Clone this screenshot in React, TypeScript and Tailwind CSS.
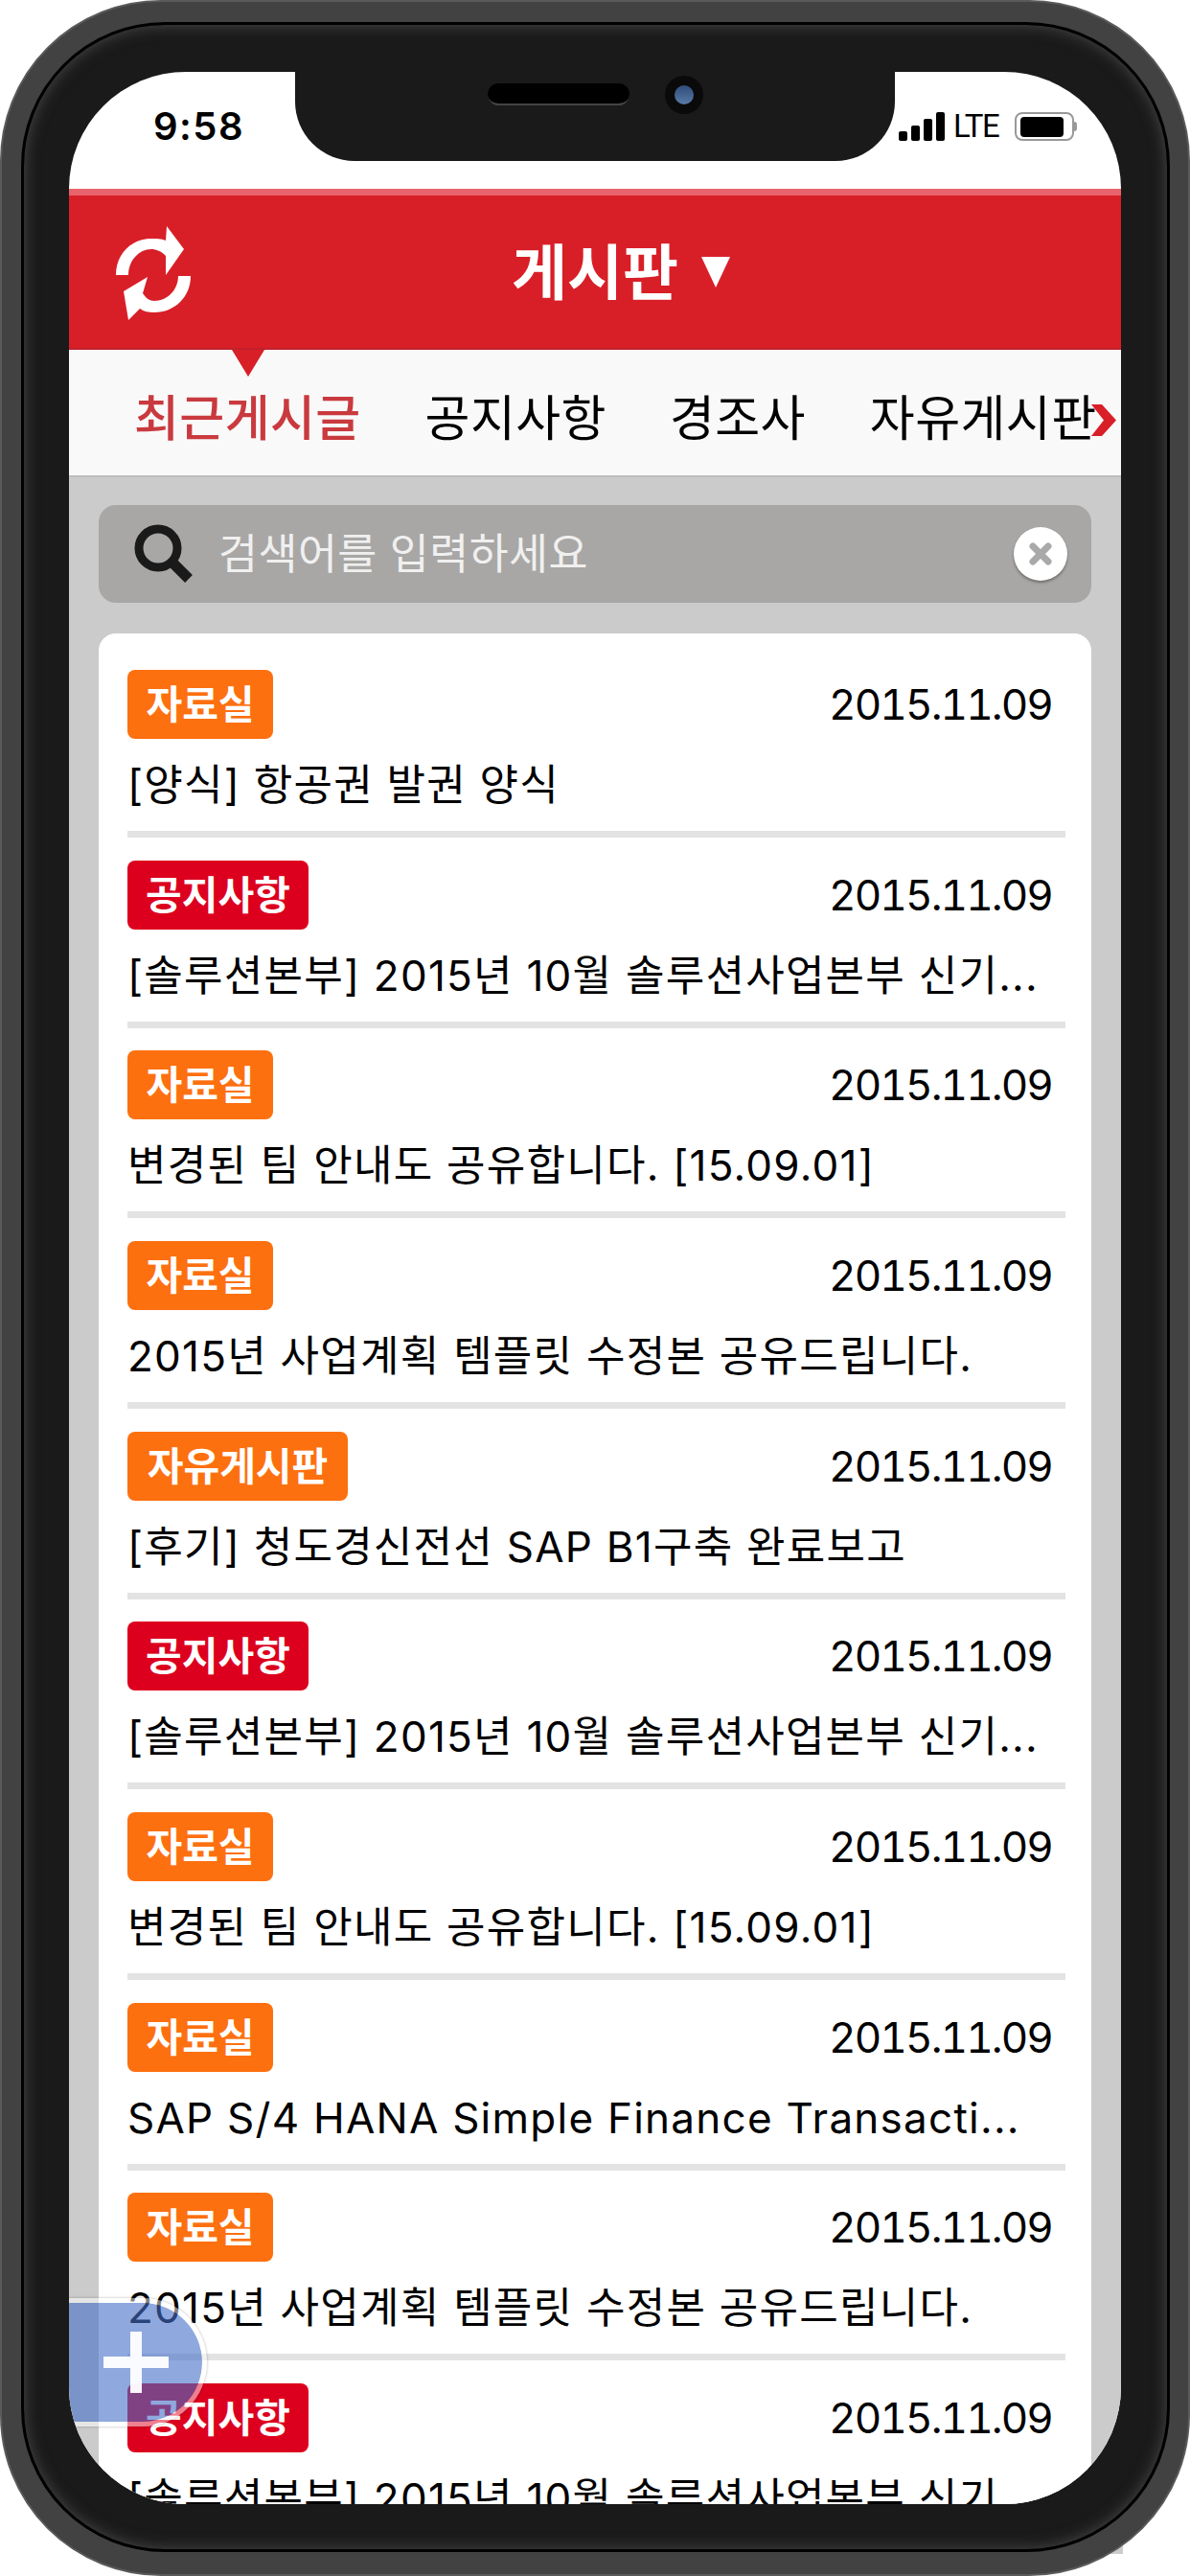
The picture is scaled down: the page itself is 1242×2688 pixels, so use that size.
const FONT = "font-['Inter','Noto_Sans_CJK_KR',sans-serif]";

type Row = { tag: string; color: string; w: string; title: string };
const ORANGE = "bg-[#fd7010]";
const RED = "bg-[#dc001e]";
const rows: Row[] = [
  { tag: "자료실", color: ORANGE, w: "w-[152px]", title: "[양식] 항공권 발권 양식" },
  { tag: "공지사항", color: RED, w: "w-[189px]", title: "[솔루션본부] 2015년 10월 솔루션사업본부 신기..." },
  { tag: "자료실", color: ORANGE, w: "w-[152px]", title: "변경된 팀 안내도 공유합니다. [15.09.01]" },
  { tag: "자료실", color: ORANGE, w: "w-[152px]", title: "2015년 사업계획 템플릿 수정본 공유드립니다." },
  { tag: "자유게시판", color: ORANGE, w: "w-[230px]", title: "[후기] 청도경신전선 SAP B1구축 완료보고" },
  { tag: "공지사항", color: RED, w: "w-[189px]", title: "[솔루션본부] 2015년 10월 솔루션사업본부 신기..." },
  { tag: "자료실", color: ORANGE, w: "w-[152px]", title: "변경된 팀 안내도 공유합니다. [15.09.01]" },
  { tag: "자료실", color: ORANGE, w: "w-[152px]", title: "SAP S/4 HANA Simple Finance Transacti..." },
  { tag: "자료실", color: ORANGE, w: "w-[152px]", title: "2015년 사업계획 템플릿 수정본 공유드립니다." },
  { tag: "공지사항", color: RED, w: "w-[189px]", title: "[솔루션본부] 2015년 10월 솔루션사업본부 신기..." },
];

function SyncIcon() {
  return (
    <svg width="78" height="98" viewBox="0 0 78 98" fill="#fff">
      <path d="M0 51 C0 28 17 13 37 13 C42 13 47 13 52 15 L53 0 L71 24 L52 51 L52 31 C47 26 42 24 37 24 C24 24 13 36 13 51 Z" />
      <path d="M78 52 C78 74 61 90 40 90 C34 90 29 89 25 86 L13 98 L8 68 L33 53 L28 70 C31 75 35 78 40 78 C54 78 65 66 65 52 Z" />
    </svg>
  );
}

function StatusIcons() {
  return (
    <div className="flex items-center">
      <div className="flex h-[30px] items-end gap-[4px]">
        <div className="h-[10px] w-[9px] rounded-[2px] bg-black" />
        <div className="h-[16px] w-[9px] rounded-[2px] bg-black" />
        <div className="h-[23px] w-[9px] rounded-[2px] bg-black" />
        <div className="h-[30px] w-[9px] rounded-[2px] bg-black" />
      </div>
      <span className="ml-[9px] w-[52px] font-['Roboto',sans-serif] text-[33px] leading-[30px] tracking-[-1.5px] text-black">LTE</span>
      <div className="ml-[12px] flex items-center">
        <div className="flex h-[30px] w-[62px] items-center rounded-[8px] border-2 border-[#999] pl-[4px]">
          <div className="h-[21px] w-[45px] rounded-[4px] bg-black" />
        </div>
        <div className="h-[10px] w-[3px] rounded-r-[3px] bg-[#999]" />
      </div>
    </div>
  );
}

function Notch() {
  return (
    <div className="absolute left-[236px] top-0 z-20 flex h-[93px] w-[626px] items-start rounded-b-[62px] bg-[#1a1a1a]">
      <div className="ml-[201px] mt-[12px] h-[23px] w-[148px] rounded-full border-b-2 border-[#444] bg-black" />
      <div className="ml-[37px] mt-[4px] flex h-[40px] w-[40px] items-center justify-center rounded-full bg-[#0a0a0a]">
        <div className="h-[20px] w-[20px] rounded-full bg-gradient-to-b from-[#2f4d7c] to-[#5a7aa6]" />
      </div>
    </div>
  );
}

function Tabs() {
  return (
    <div className="relative flex h-[131px] flex-none items-center overflow-hidden bg-[#f9f9f9] pl-[68px] pt-[12px] text-[51px] leading-[60px] tracking-[0.4px] text-black">
      <div className="absolute left-[170px] top-0 h-0 w-0 border-x-[17px] border-t-[28px] border-x-transparent border-t-[#d81f28]" />
      <span className="flex-none font-medium text-[#c93a3f]">최근게시글</span>
      <span className="ml-[67px] flex-none">공지사항</span>
      <span className="ml-[66px] flex-none">경조사</span>
      <span className="ml-[67px] flex-none">자유게시판</span>
      <svg className="absolute left-[1067px] top-[57px]" width="26" height="33" viewBox="0 0 26 33" fill="#d81f28">
        <path d="M0 0 H11 L26 16.5 L11 33 H0 L13 16.5 Z" />
      </svg>
    </div>
  );
}

function Search() {
  return (
    <div className="flex h-[102px] flex-none items-center rounded-[18px] bg-[#a8a7a5] pl-[37px] pr-[25px]">
      <svg width="62" height="62" viewBox="0 0 62 62" fill="none" stroke="#1a1a1a" className="flex-none">
        <circle cx="25" cy="25" r="20" strokeWidth="9" />
        <path d="M39 39 L57 57" strokeWidth="11" />
      </svg>
      <span className="ml-[26px] flex-1 whitespace-nowrap text-[44.5px] leading-[60px] tracking-[0.5px] text-[#f0f0f0]">검색어를 입력하세요</span>
      <div className="flex h-[56px] w-[56px] flex-none items-center justify-center rounded-full bg-white shadow-[0_2px_3px_rgba(0,0,0,0.35)]">
        <svg width="24" height="24" viewBox="0 0 24 24" stroke="#a9a9a9" strokeWidth="7" strokeLinecap="round">
          <path d="M4 4 L20 20 M20 4 L4 20" />
        </svg>
      </div>
    </div>
  );
}

function ListRow({ row }: { row: Row }) {
  return (
    <div className="h-[198.67px]">
      <div className="flex h-[72px] items-center justify-between pr-[41px]">
        <div className={`flex h-[72px] items-center justify-center rounded-[8px] text-[41px] font-semibold leading-[72px] text-white ${row.color} ${row.w}`}>
          {row.tag}
        </div>
        <span className="text-[44px] leading-[60px] tracking-[-1.9px] text-black tabular-nums">2015.11.09</span>
      </div>
      <div className="h-[96px] whitespace-nowrap text-[44px] leading-[96px] tracking-[1.25px] text-black">{row.title}</div>
      <div className="mr-[27px] h-[7px] bg-[#e3e3e3]" />
    </div>
  );
}

export default function App() {
  return (
    <div className={`relative h-[2688px] w-[1242px] bg-white ${FONT}`}>
      <div className="absolute bottom-[23px] left-[1132px] h-[40px] w-[40px] bg-[#cccccc]" />
      <div className="relative h-[2688px] w-[1242px] rounded-[168px] border-2 border-[#5a5a5a] bg-[#424242] pb-[23px] pl-[20px] pr-[19px] pt-[21px]">
        <div className="h-full w-full rounded-[150px] border-[3px] border-black bg-[#1a1a1a] pb-[46px] pl-[47px] pr-[48px] pt-[49px] shadow-[inset_0_0_16px_#4a4a4a]">
          <div className="relative flex h-[2538px] w-[1098px] flex-col overflow-hidden rounded-[122px] bg-white">
            <Notch />
            <div className="flex h-[122px] flex-none items-start justify-between pl-[88px] pr-[46px]">
              <span className="mt-[31px] text-[40px] font-semibold leading-[52px] tracking-[1.5px] text-black">9:58</span>
              <div className="mt-[42px]"><StatusIcons /></div>
            </div>
            <div className="grid h-[168px] flex-none grid-cols-[1fr_auto_1fr] items-center border-b-2 border-t-[7px] border-b-[#c1202c] border-t-[#e8636b] bg-[#d81f28]">
              <div className="pl-[49px] pt-[2px]"><SyncIcon /></div>
              <span className="text-[63px] font-bold leading-[80px] text-white">게시판</span>
              <div className="pl-[24px]">
                <svg width="30" height="32" viewBox="0 0 30 32" fill="#fff"><path d="M0 0 H30 L15 32 Z" /></svg>
              </div>
            </div>
            <Tabs />
            <div className="flex min-h-0 flex-1 flex-col overflow-hidden border-t-2 border-t-[#bdbdbd] bg-[#cbcbcb] px-[31px] pt-[29px]">
              <Search />
              <div className="mt-[32px] flex-none rounded-t-[18px] bg-white pl-[30px] pt-[38px]">
                {rows.map((row, i) => (
                  <ListRow key={i} row={row} />
                ))}
              </div>
            </div>
            <div className="absolute left-0 top-[2323px] z-10 flex h-[134px] w-[144px] items-center justify-center rounded-r-[67px] border-y-[5px] border-r-[5px] border-white/50 bg-[rgba(68,110,200,0.6)] bg-clip-padding pl-[1px] shadow-[0_0_3px_rgba(0,0,0,0.3)]">
              <svg width="68" height="64" viewBox="0 0 68 64" fill="#fff" fillOpacity="0.95">
                <path d="M28 0 H40 V26 H68 V38 H40 V64 H28 V38 H0 V26 H28 Z" />
              </svg>
            </div>
          </div>
        </div>
      </div>
    </div>
  );
}
